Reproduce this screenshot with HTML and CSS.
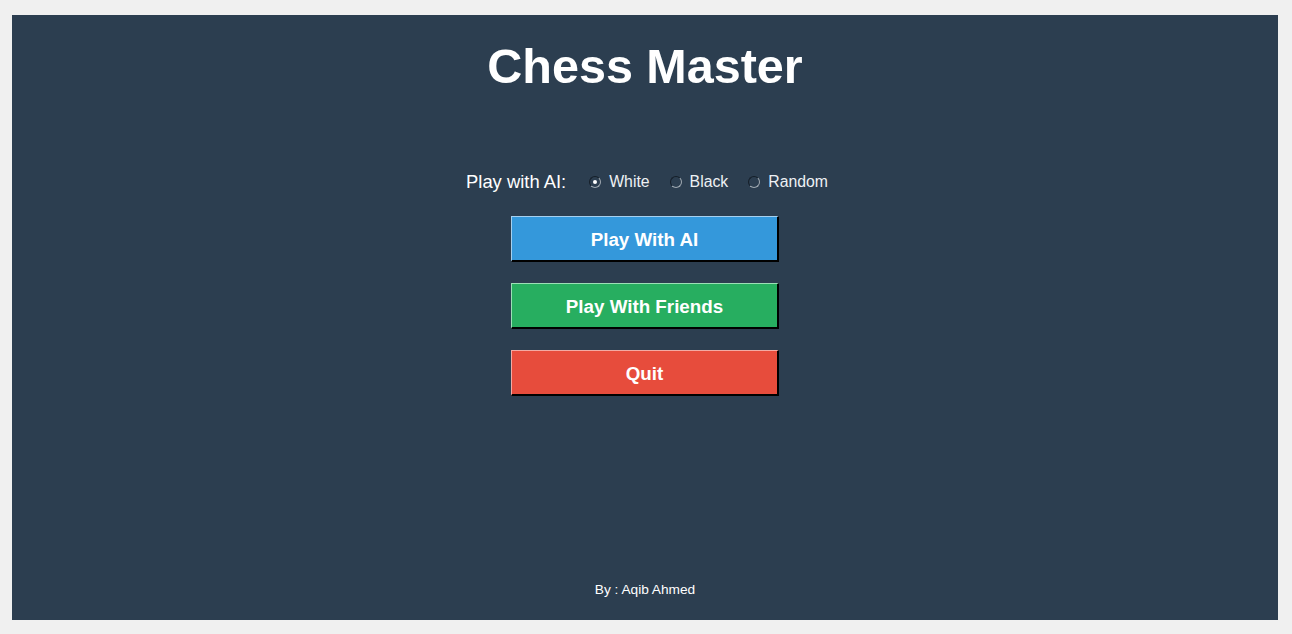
FILE: index.html
```html
<!DOCTYPE html>
<html lang="en">
<head>
<meta charset="utf-8">
<title>Chess Master</title>
<link rel="stylesheet" href="styles.css">
</head>
<body>
<main class="panel">
  <h1 class="title">Chess Master</h1>
  <div class="ai-row">
    <span class="ai-label">Play with AI:</span>
    <label class="opt"><input type="radio" name="side" class="radio" checked><span>White</span></label>
    <label class="opt"><input type="radio" name="side" class="radio"><span>Black</span></label>
    <label class="opt"><input type="radio" name="side" class="radio"><span>Random</span></label>
  </div>
  <div class="buttons">
    <button class="btn btn-blue">Play With AI</button>
    <button class="btn btn-green">Play With Friends</button>
    <button class="btn btn-red">Quit</button>
  </div>
  <footer class="footer">By : Aqib Ahmed</footer>
</main>
</body>
</html>
```

FILE: styles.css
```css
html, body {
  margin: 0;
  padding: 0;
}
body {
  background: #f0f0f0;
  padding: 15px 14px 14px 12px;
  font-family: "Liberation Sans", Arial, sans-serif;
}
.panel {
  width: 1266px;
  height: 605px;
  box-sizing: border-box;
  background: #2c3e50;
  display: flex;
  flex-direction: column;
  align-items: center;
  padding: 23px 0 22px;
  color: #ffffff;
}
.title {
  margin: 0;
  font-size: 48.5px;
  line-height: 56px;
  font-weight: bold;
}
.ai-row {
  margin-top: 76px;
  height: 24px;
  display: flex;
  align-items: center;
  padding-left: 4px;
}
.ai-label {
  font-size: 18.4px;
  line-height: 24px;
  margin-right: 23px;
}
.opt {
  display: flex;
  align-items: center;
  font-size: 15.8px;
  line-height: 20px;
  margin-right: 20px;
  color: #eef1f4;
}
.opt:last-child {
  margin-right: 0;
}
.radio {
  appearance: none;
  -webkit-appearance: none;
  margin: 0 8px 0 0;
  width: 12px;
  height: 12px;
  border-radius: 50%;
  border: 1px solid;
  border-color: #151f29 #a0a9b1 #a0a9b1 #151f29;
  background: #2c3e50;
  position: relative;
  box-sizing: border-box;
}
.radio:checked::after {
  content: "";
  position: absolute;
  left: 3px;
  top: 3px;
  width: 4px;
  height: 4px;
  border-radius: 50%;
  background: #ffffff;
}
.buttons {
  margin-top: 22px;
  display: flex;
  flex-direction: column;
  gap: 21px;
}
.btn {
  width: 268px;
  height: 46px;
  box-sizing: border-box;
  font-family: "Liberation Sans", Arial, sans-serif;
  font-size: 18.8px;
  font-weight: bold;
  color: #ffffff;
  border-style: solid;
  border-width: 1px 2px 2px 1px;
  padding: 2px 0 0;
  cursor: pointer;
}
.btn-blue {
  background: #3498db;
  border-color: #a6d0ef #000000 #000000 #a6d0ef;
}
.btn-green {
  background: #27ae60;
  border-color: #9ce0b6 #000000 #000000 #9ce0b6;
}
.btn-red {
  background: #e74c3c;
  border-color: #f3aaa3 #000000 #000000 #f3aaa3;
}
.footer {
  margin-top: auto;
  font-size: 13.7px;
  line-height: 16px;
}
```
